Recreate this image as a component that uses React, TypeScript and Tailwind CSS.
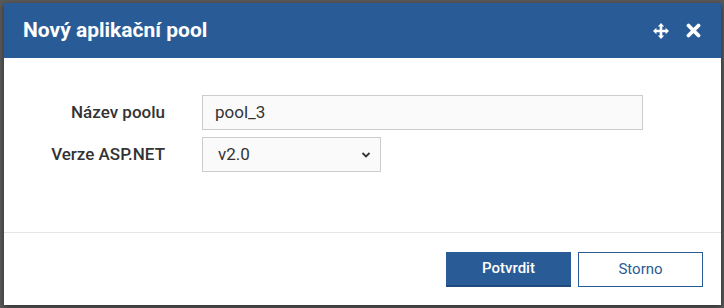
import React from "react";

function MoveIcon() {
  return (
    <svg width="16" height="16" viewBox="0 0 16 16" fill="white">
      <path d="M8 0 L11.2 3.4 L9.3 3.4 L9.3 6.7 L12.6 6.7 L12.6 4.8 L16 8 L12.6 11.2 L12.6 9.3 L9.3 9.3 L9.3 12.6 L11.2 12.6 L8 16 L4.8 12.6 L6.7 12.6 L6.7 9.3 L3.4 9.3 L3.4 11.2 L0 8 L3.4 4.8 L3.4 6.7 L6.7 6.7 L6.7 3.4 L4.8 3.4 Z" />
    </svg>
  );
}

function CloseIcon() {
  return (
    <svg width="15" height="15" viewBox="0 0 15 15">
      <path d="M2.5 2.5 L12.5 12.5 M12.5 2.5 L2.5 12.5" stroke="white" strokeWidth="3.8" strokeLinecap="round" />
    </svg>
  );
}

export default function App() {
  return (
    <div className="w-[724px] h-[308px] bg-[#5a5a5a] pt-[3px] pl-[4px] overflow-hidden font-['Roboto',sans-serif]">
      <div className="w-[717px] h-[302px] bg-white flex flex-col shadow-[0_2px_6px_rgba(0,0,0,0.5)]">
        {/* Header */}
        <div className="h-[55px] bg-[#295b96] flex items-center justify-between pl-[19px] pr-[20px]">
          <h1 className="text-[21px] font-bold text-white leading-none">Nový aplikační pool</h1>
          <div className="flex items-center gap-[17px]">
            <MoveIcon />
            <CloseIcon />
          </div>
        </div>

        {/* Body */}
        <div className="h-[174px] pt-[37px]">
          <div className="grid grid-cols-[161px_441px] gap-x-[37px] gap-y-[7px] items-center">
            <label className="text-right text-[17px] font-medium text-[#333]">Název poolu</label>
            <div className="h-[35px] border border-[#cccccc] bg-[#fafafa] flex items-center pl-[12px] text-[17px] text-[#333]">
              pool_3
            </div>
            <label className="text-right text-[17px] font-medium text-[#333]">Verze ASP.NET</label>
            <div className="w-[179px] h-[35px] border border-[#cccccc] bg-[#fafafa] flex items-center justify-between pl-[15px] pr-[9px] text-[17px] text-[#333]">
              <span>v2.0</span>
              <svg width="10" height="8" viewBox="0 0 10 8">
                <path d="M1.5 2 L5 5.5 L8.5 2" stroke="#333" strokeWidth="1.8" fill="none" />
              </svg>
            </div>
          </div>
        </div>

        {/* Footer */}
        <div className="border-t border-[#e5e5e5] flex justify-end gap-[7px] pt-[19px] pr-[18px]">
          <button className="w-[125px] h-[35px] bg-[#295b96] border-b-2 border-[#1f4a7d] text-white text-[15px] font-medium">
            Potvrdit
          </button>
          <button className="w-[125px] h-[35px] bg-white border border-[#295b96] text-[#295b96] text-[15px]">
            Storno
          </button>
        </div>
      </div>
    </div>
  );
}
